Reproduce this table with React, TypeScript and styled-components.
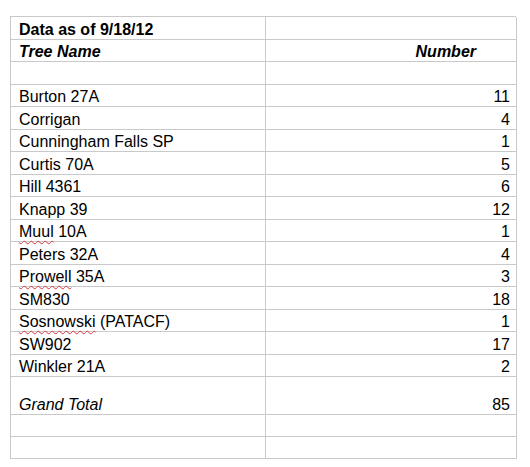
import React from "react";
import styled, { createGlobalStyle } from "styled-components";

const GlobalStyle = createGlobalStyle`
  html, body {
    margin: 0;
    padding: 0;
    background: #ffffff;
  }
  body {
    font-family: "Liberation Sans", Arial, sans-serif;
    color: #000000;
  }
`;

const Page = styled.div`
  padding: 16px 0 0 10px;
`;

const Table = styled.div`
  display: grid;
  grid-template-columns: 255px 251px;
  width: 506px;
  border-top: 1px solid #c9c9c9;
  border-left: 1px solid #c9c9c9;
  box-sizing: border-box;
`;

type CellProps = {
  $h?: number;
  $right?: boolean;
  $bold?: boolean;
  $italic?: boolean;
  $padRight?: number;
};

const Cell = styled.div<CellProps>`
  box-sizing: border-box;
  height: ${(p) => p.$h ?? 22.5}px;
  border-right: 1px solid #c9c9c9;
  border-bottom: 1px solid #c9c9c9;
  display: flex;
  align-items: flex-end;
  justify-content: ${(p) => (p.$right ? "flex-end" : "flex-start")};
  padding: 0 ${(p) => p.$padRight ?? 6}px 0 8px;
  font-size: 16px;
  line-height: 18px;
  font-weight: ${(p) => (p.$bold ? 700 : 400)};
  font-style: ${(p) => (p.$italic ? "italic" : "normal")};
  white-space: nowrap;
`;

const Text = styled.span`
  display: block;
`;

const Misspelled = styled.span`
  text-decoration: underline wavy #d9363e;
  text-decoration-thickness: 1px;
  text-underline-offset: 3px;
  text-decoration-skip-ink: none;
`;

type Row = { name: React.ReactNode; num: string };

const rows: Row[] = [
  { name: "Burton 27A", num: "11" },
  { name: "Corrigan", num: "4" },
  { name: "Cunningham Falls SP", num: "1" },
  { name: "Curtis 70A", num: "5" },
  { name: "Hill 4361", num: "6" },
  { name: "Knapp 39", num: "12" },
  { name: <><Misspelled>Muul</Misspelled> 10A</>, num: "1" },
  { name: "Peters 32A", num: "4" },
  { name: <><Misspelled>Prowell</Misspelled> 35A</>, num: "3" },
  { name: "SM830", num: "18" },
  { name: <><Misspelled>Sosnowski</Misspelled> (PATACF)</>, num: "1" },
  { name: "SW902", num: "17" },
  { name: "Winkler 21A", num: "2" },
];

export default function App() {
  return (
    <>
      <GlobalStyle />
      <Page>
        <Table>
          <Cell $bold><Text>Data as of 9/18/12</Text></Cell>
          <Cell />
          <Cell $bold $italic><Text>Tree Name</Text></Cell>
          <Cell $bold $italic $right $padRight={40}><Text>Number</Text></Cell>
          <Cell />
          <Cell />
          {rows.map((r, i) => (
            <React.Fragment key={i}>
              <Cell><Text>{r.name}</Text></Cell>
              <Cell $right><Text>{r.num}</Text></Cell>
            </React.Fragment>
          ))}
          <Cell $h={37.6} $italic><Text>Grand Total</Text></Cell>
          <Cell $h={37.6} $right><Text>85</Text></Cell>
          <Cell $h={22.4} />
          <Cell $h={22.4} />
          <Cell $h={22.4} />
          <Cell $h={22.4} />
        </Table>
      </Page>
    </>
  );
}
